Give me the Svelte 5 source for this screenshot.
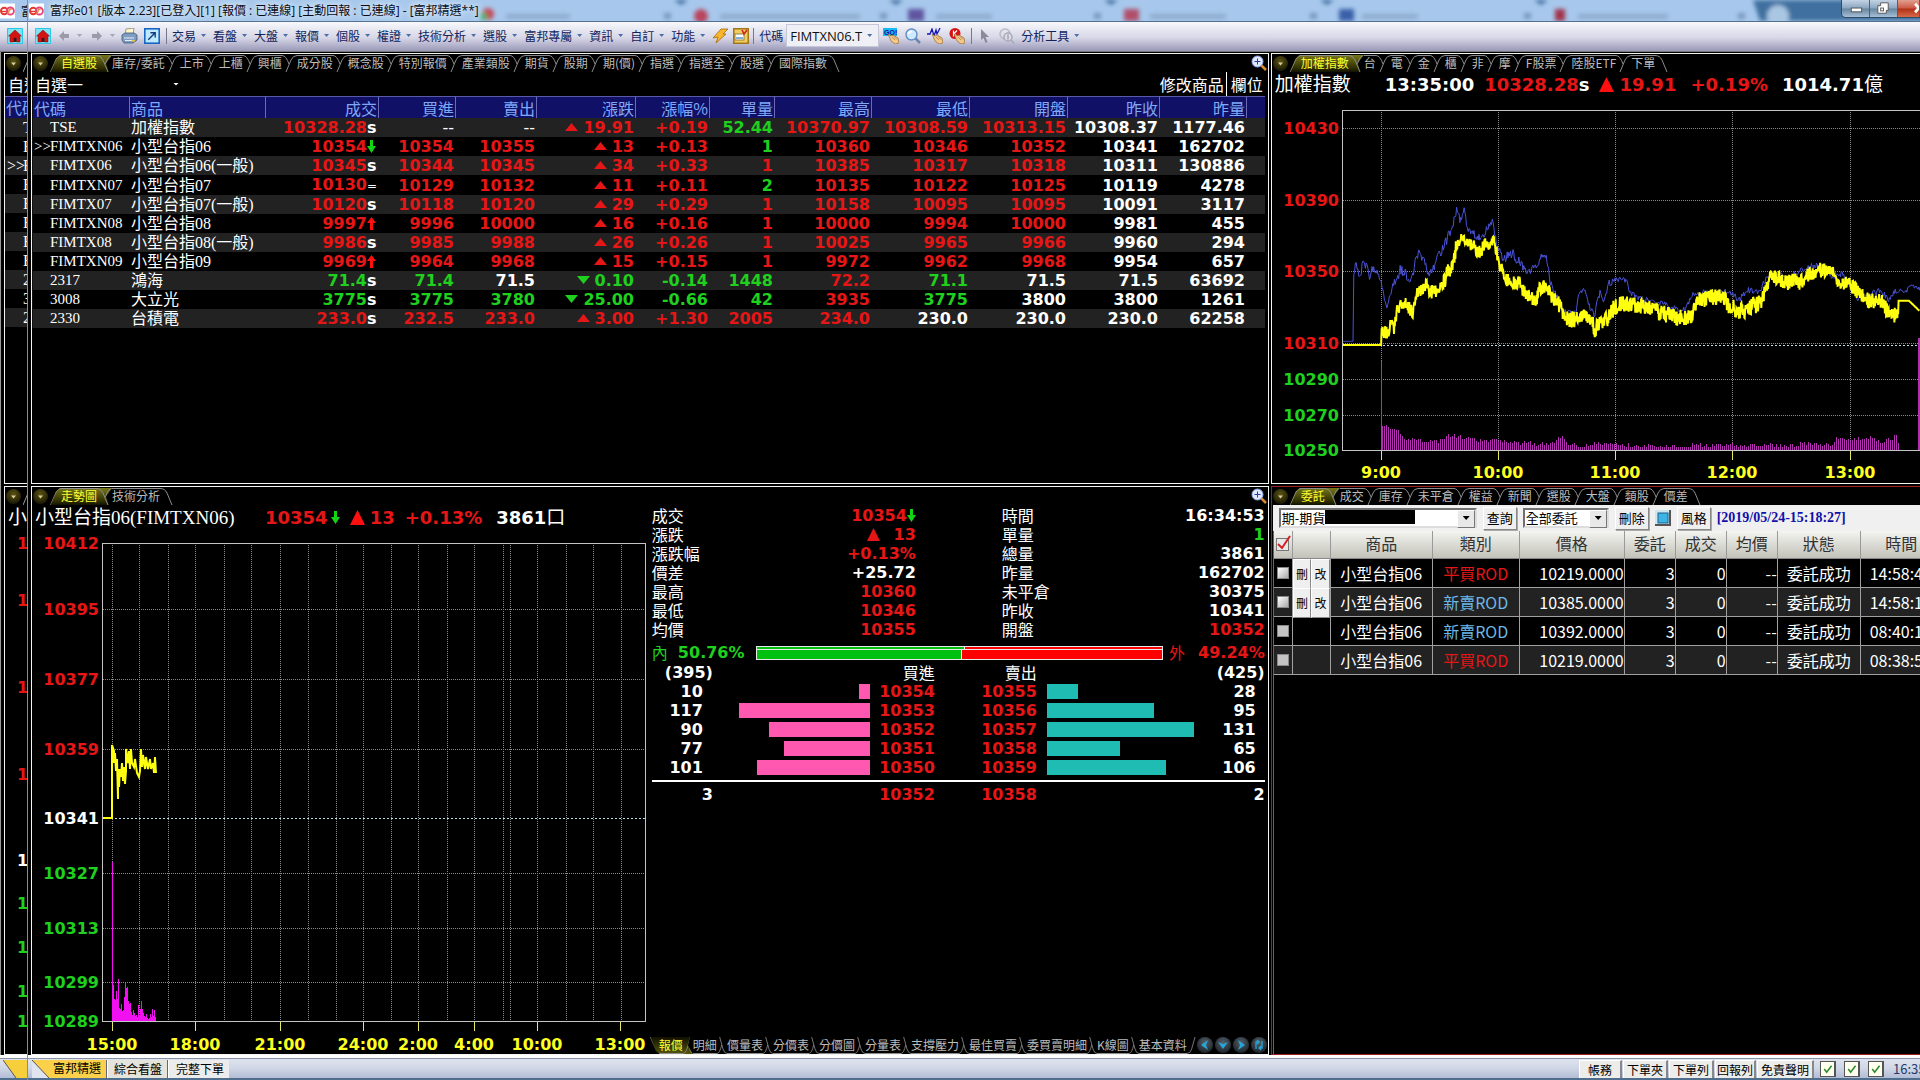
<script>
  const menus = ['交易', '看盤', '大盤', '報價', '個股', '權證', '技術分析', '選股', '富邦專屬', '資訊', '自訂', '功能'];
  const watchTabs = ['自選股', '庫存/委託', '上市', '上櫃', '興櫃', '成分股', '概念股', '特別報價', '產業類股', '期貨', '股期', '期(價)', '指選', '指選全', '股選', '國際指數'];
  const indexTabs = ['加權指數', '台', '電', '金', '櫃', '非', '摩', 'F股票', '陸股ETF', '下單'];
  const trendTabs = ['走勢圖', '技術分析'];
  const orderTabs = ['委託', '成交', '庫存', '未平倉', '權益', '新聞', '選股', '大盤', '類股', '價差'];
  const quoteTabs = ['報價', '明細', '價量表', '分價表', '分價圖', '分量表', '支撐壓力', '最佳買賣', '委買賣明細', 'K線圖', '基本資料'];

  const heads = ['代碼', '商品', '成交', '買進', '賣出', '漲跌', '漲幅%', '單量', '最高', '最低', '開盤', '昨收', '昨量'];
  const colWidths = [97, 136, 113, 77, 81, 99, 74, 65, 97, 98, 98, 92, 87];

  // Each quote: code, name, then "value|colour" cells; the last trade carries a suffix mark.
  const rows = [
    ['TSE', '加權指數', '10328.28|r', 's', '--|w', '--|w', '19.91|r', '+0.19|r', '52.44|g', '10370.97|r', '10308.59|r', '10313.15|r', '10308.37|w', '1177.46|w'],
    ['FIMTXN06', '小型台指06', '10354|r', 'down', '10354|r', '10355|r', '13|r', '+0.13|r', '1|g', '10360|r', '10346|r', '10352|r', '10341|w', '162702|w'],
    ['FIMTX06', '小型台指06(一般)', '10345|r', 's', '10344|r', '10345|r', '34|r', '+0.33|r', '1|r', '10385|r', '10317|r', '10318|r', '10311|w', '130886|w'],
    ['FIMTXN07', '小型台指07', '10130|r', '=', '10129|r', '10132|r', '11|r', '+0.11|r', '2|g', '10135|r', '10122|r', '10125|r', '10119|w', '4278|w'],
    ['FIMTX07', '小型台指07(一般)', '10120|r', 's', '10118|r', '10120|r', '29|r', '+0.29|r', '1|r', '10158|r', '10095|r', '10095|r', '10091|w', '3117|w'],
    ['FIMTXN08', '小型台指08', '9997|r', 'up', '9996|r', '10000|r', '16|r', '+0.16|r', '1|r', '10000|r', '9994|r', '10000|r', '9981|w', '455|w'],
    ['FIMTX08', '小型台指08(一般)', '9986|r', 's', '9985|r', '9988|r', '26|r', '+0.26|r', '1|r', '10025|r', '9965|r', '9966|r', '9960|w', '294|w'],
    ['FIMTXN09', '小型台指09', '9969|r', 'up', '9964|r', '9968|r', '15|r', '+0.15|r', '1|r', '9972|r', '9962|r', '9968|r', '9954|w', '657|w'],
    ['2317', '鴻海', '71.4|g', 's', '71.4|g', '71.5|w', '0.10|g', '-0.14|g', '1448|g', '72.2|r', '71.1|g', '71.5|w', '71.5|w', '63692|w'],
    ['3008', '大立光', '3775|g', 's', '3775|g', '3780|g', '25.00|g', '-0.66|g', '42|g', '3935|r', '3775|g', '3800|w', '3800|w', '1261|w'],
    ['2330', '台積電', '233.0|r', 's', '232.5|r', '233.0|r', '3.00|r', '+1.30|r', '2005|r', '234.0|r', '230.0|w', '230.0|w', '230.0|w', '62258|w']
  ].map(([code, name, last, mark, ...cells]) => ({
    code,
    name,
    last: last.split('|'),
    mark,
    cells: cells.map((c) => c.split('|'))
  }));

  const details = [
    ['成交', '10354', 'r', '時間', '16:34:53', 'w'],
    ['漲跌', '13', 'r', '單量', '1', 'g'],
    ['漲跌幅', '+0.13%', 'r', '總量', '3861', 'w'],
    ['價差', '+25.72', 'w', '昨量', '162702', 'w'],
    ['最高', '10360', 'r', '未平倉', '30375', 'w'],
    ['最低', '10346', 'r', '昨收', '10341', 'w'],
    ['均價', '10355', 'r', '開盤', '10352', 'r']
  ];
  const depth = [
    [10, 10354, 10355, 28],
    [117, 10353, 10356, 95],
    [90, 10352, 10357, 131],
    [77, 10351, 10358, 65],
    [101, 10350, 10359, 106]
  ];

  const orders = [
    ['平買ROD', 'r', '10219.0000', '14:58:4', true],
    ['新賣ROD', 'b', '10385.0000', '14:58:1', true],
    ['新賣ROD', 'b', '10392.0000', '08:40:1', false],
    ['平買ROD', 'r', '10219.0000', '08:38:5', false]
  ];

  const stripCodes = ['T', 'F', 'F', 'F', 'F', 'F', 'F', 'F', '2', '3', '2'];
  const stripLevels = [[12, 'r'], [69, 'r'], [156, 'r'], [243, 'r'], [329, 'w'], [372, 'g'], [416, 'g'], [460, 'g'], [490, 'g']];

  const indexLevels = [[30, 10430, 'r'], [102, 10390, 'r'], [173, 10350, 'r'], [245, 10310, 'r'], [281, 10290, 'g'], [317, 10270, 'g'], [352, 10250, 'g']];
  const indexHours = [[109, '9:00'], [226, '10:00'], [343, '11:00'], [460, '12:00'], [578, '13:00']];
  const trendLevels = [[12, 10412, 'r'], [78, 10395, 'r'], [148, 10377, 'r'], [218, 10359, 'r'], [287, 10341, 'w'], [342, 10327, 'g'], [397, 10313, 'g'], [451, 10299, 'g'], [490, 10289, 'g']];
  const trendVerticals = [80, 107, 136, 163, 192, 219, 248, 276, 304, 331, 359, 386, 415, 442, 471, 478, 505, 534, 561, 589];
  const trendHours = [[80, '15:00'], [163, '18:00'], [248, '21:00'], [331, '24:00'], [386, '2:00'], [442, '4:00'], [505, '10:00'], [588, '13:00']];

  // Small seeded generator, so that the tick noise is the same on every load.
  function noise(seed) {
    let s = seed;
    return () => ((s = (s * 16807) % 2147483647) / 2147483647) * 2 - 1;
  }

  const sx = (x) => 71 + (x - 175) / 2.412;

  function interpolate(points, x) {
    let i = 1;
    while (i < points.length - 1 && points[i][0] < x) i++;
    const a = points[i - 1];
    const b = points[i];
    const t = Math.min(1, Math.max(0, (x - a[0]) / (b[0] - a[0] || 1)));
    return [a[1] + (b[1] - a[1]) * t, (a[2] ?? 0) + ((b[2] ?? 0) - (a[2] ?? 0)) * t];
  }

  function trace(points, step, seed, gain) {
    const rnd = noise(seed);
    const out = [];
    for (let x = points[0][0]; x <= points[points.length - 1][0]; x += step) {
      const [y, spread] = interpolate(points, x);
      out.push(`${sx(x).toFixed(1)},${((y + rnd() * spread * gain) / 3 + 2).toFixed(1)}`);
    }
    return out.join(' ');
  }

  const cash = [
    [175, 735, 0], [267, 735, 0], [268, 690, 12], [285, 706, 20], [290, 665, 12], [298, 690, 12], [305, 630, 18], [320, 608, 16], [345, 635, 18], [355, 575, 15],
    [375, 558, 16], [390, 575, 20], [400, 575, 14], [410, 560, 14], [430, 520, 26], [440, 490, 20], [450, 430, 20], [460, 412, 10], [475, 425, 10],
    [490, 445, 20], [508, 455, 18], [520, 430, 20], [540, 422, 12], [550, 480, 20], [565, 540, 16], [600, 550, 18], [615, 580, 16], [640, 605, 16],
    [650, 562, 20], [665, 560, 16], [680, 590, 18], [695, 612, 18], [710, 655, 22], [735, 660, 20], [755, 642, 18], [775, 660, 16], [783, 690, 22],
    [795, 665, 18], [815, 655, 18], [830, 615, 26], [850, 610, 18], [900, 620, 18], [945, 640, 20], [990, 655, 22], [1018, 650, 16], [1022, 620, 12],
    [1035, 600, 20], [1090, 587, 20], [1100, 610, 20], [1130, 635, 22], [1180, 610, 20], [1193, 580, 16], [1205, 530, 14], [1215, 530, 16],
    [1240, 545, 20], [1280, 545, 20], [1300, 525, 20], [1318, 510, 20], [1358, 512, 12], [1365, 548, 12], [1400, 552, 20], [1415, 575, 16],
    [1440, 600, 20], [1475, 605, 18], [1490, 635, 20], [1514, 652, 18], [1515, 602, 0], [1540, 602, 0], [1565, 632, 0]
  ];
  const futures = [
    [175, 724, 0], [199, 724, 0], [201, 520, 10], [205, 485, 10], [215, 540, 14], [222, 495, 14], [230, 490, 14], [240, 530, 14], [250, 500, 14], [262, 520, 12],
    [270, 560, 14], [281, 630, 10], [292, 560, 14], [300, 550, 14], [313, 510, 12], [325, 520, 14], [335, 545, 12], [345, 515, 12], [352, 470, 14],
    [360, 462, 12], [370, 475, 12], [380, 530, 10], [395, 500, 10], [410, 455, 14], [425, 420, 14], [440, 375, 12], [450, 330, 12], [458, 360, 10],
    [467, 335, 10], [475, 380, 10], [490, 400, 10], [508, 420, 10], [520, 390, 10], [535, 362, 10], [545, 430, 10], [560, 470, 14], [585, 465, 14],
    [605, 495, 12], [620, 515, 12], [640, 500, 10], [658, 460, 8], [667, 480, 8], [675, 550, 10], [695, 600, 10], [710, 640, 10], [735, 640, 10],
    [745, 580, 10], [757, 570, 8], [770, 620, 8], [782, 650, 8], [792, 580, 12], [805, 600, 12], [815, 550, 10], [835, 535, 8], [857, 538, 8],
    [868, 580, 8], [900, 600, 8], [950, 610, 8], [970, 625, 8], [1000, 630, 8], [1020, 580, 6], [1050, 577, 8], [1090, 575, 8], [1115, 580, 8],
    [1130, 600, 8], [1150, 570, 8], [1180, 575, 8], [1193, 540, 8], [1210, 520, 8], [1250, 530, 8], [1300, 500, 8], [1335, 495, 8], [1350, 530, 8],
    [1378, 520, 8], [1400, 560, 8], [1415, 595, 8], [1440, 590, 8], [1470, 570, 10], [1490, 600, 8], [1505, 575, 6], [1535, 572, 6], [1545, 555, 4], [1568, 568, 6]
  ];
  const indexVolume = [
    [270, 78], [290, 58], [310, 54], [320, 35], [340, 33], [360, 30], [400, 25], [430, 44], [460, 38], [500, 28], [540, 28], [560, 30], [600, 20],
    [620, 25], [640, 18], [680, 20], [703, 42], [715, 20], [750, 12], [790, 20], [830, 18], [880, 12], [1000, 10], [1020, 18], [1050, 12],
    [1115, 14], [1190, 15], [1250, 12], [1290, 20], [1320, 15], [1350, 15], [1368, 38], [1400, 28], [1435, 40], [1470, 25], [1510, 40], [1514, 20]
  ];
  const cashLine = trace(cash, 1, 77, 1.25);
  const futuresLine = trace(futures, 2, 1234, 1.2);

  const volRnd = noise(41);
  const indexBars = [];
  for (let x = 110; x <= 626; x += 2) {
    const [h] = interpolate(indexVolume, 175 + (x - 71) * 2.412);
    indexBars.push([x, Math.max(3, Math.round(h / 3 + volRnd() * 2))]);
  }

  const trendLine = '70,287 80,287 80,214 82,220 82,232 83,222 84,240 85,228 86,268 86,238 87,256 88,238 89,246 90,232 91,250 92,236 93,253 94,240 94,218 96,232 97,220 98,238 99,218 100,232 102,236 103,228 105,242 107,246 108,240 109,218 110,236 111,224 113,238 114,226 116,238 118,228 119,238 121,232 122,242 123,226 124,242';
  const trendBars = [36, 22, 21, 30, 22, 42, 13, 12, 17, 10, 11, 24, 38, 33, 34, 20, 17, 18, 9, 6, 11, 8, 5, 6, 4, 16, 6, 12, 20, 12, 8, 5, 4, 7, 3, 2, 3, 7, 4, 12, 5, 11, 4];
</script>

{#snippet tabbar(items, flip)}
  <div class="tabs" class:flip>
    {#each items as item, i}
      <button class="tab" class:active={i === 0}>
        {#if i === 0}
          <svg class="lead" viewBox="0 0 11 17" preserveAspectRatio="none" aria-hidden="true"><path d="M0 17 L6 4 Q8 .5 11 .5" /></svg>
        {/if}
        <span>{item}</span>
        <svg class="sep" viewBox="0 0 15 17" preserveAspectRatio="none" aria-hidden="true">
          {#if i === items.length - 1}
            <path d="M0 .5 Q5 .5 7 5 L12 17" />
          {:else if i === 0}
            <path d="M0 .5 Q4 .5 6 5 L11 17 M15 .5 Q11 .5 8.500 9" />
          {:else}
            <path d="M0 .5 Q4 .5 7 9 M15 .5 Q11 .5 9 5 L4 17" />
          {/if}
        </svg>
      </button>
    {/each}
  </div>
{/snippet}

{#snippet orb()}
  <button class="orb" aria-label="選單"><svg viewBox="0 0 15 15"><path d="M5 6.500 H10 L7.500 9.500 Z" fill="#d9cf9a" /></svg></button>
{/snippet}

{#snippet zoomIcon()}
  <button class="zoom" aria-label="放大">
    <svg viewBox="0 0 16 16">
      <path d="M10.500 10.500 L15 15" stroke="#d98a2c" stroke-width="2.500" />
      <circle cx="6.500" cy="6.500" r="5.500" fill="#dfe8ff" stroke="#8fa6e6" />
      <path d="M6.500 3.500 V9.500 M3.500 6.500 H9.500" stroke="#2b3f9a" />
    </svg>
  </button>
{/snippet}

{#snippet down()}<svg class="arrow" viewBox="0 0 9 13" aria-label="跌"><path d="M3 0 H6 V6 H9 L4.500 13 L0 6 H3 Z" fill="#12d612" /></svg>{/snippet}
{#snippet up()}<svg class="arrow" viewBox="0 0 9 13" aria-label="漲"><path d="M3 13 H6 V6 H9 L4.500 0 L0 6 H3 Z" fill="#ff1010" /></svg>{/snippet}

{#snippet logo()}
  <svg class="logo" viewBox="0 0 16 16" aria-hidden="true">
    <rect width="16" height="16" fill="#fff" />
    <circle cx="4.500" cy="8" r="3.500" fill="none" stroke="#e0392b" stroke-width="2" />
    <path d="M2 8.500 H7.500" stroke="#e0392b" stroke-width="1.500" />
    <circle cx="11" cy="8" r="3.800" fill="none" stroke="#e8457a" stroke-width="2" />
    <path d="M8 11 Q10 9 10 7 Q11 5 12 7" fill="none" stroke="#f08a3a" stroke-width="1.500" />
  </svg>
{/snippet}

{#snippet home()}
  <svg class="ico" viewBox="0 0 16 16" aria-hidden="true">
    <rect width="16" height="16" rx="1" fill="#2cc6e8" /><rect x="1" y="1" width="14" height="14" fill="#7fe3f2" />
    <path d="M8 2 L14.500 8 H13 V14 H9.500 V10 H6.500 V14 H3 V8 H1.500 Z" fill="#d31414" stroke="#7c0808" stroke-width=".5" />
    <rect x="6.500" y="10" width="3" height="4" fill="#4a1010" />
  </svg>
{/snippet}

{#snippet hand()}
  <path d="M5 6 L8 8 L10 7 L15 10 L16 15 L12 16 L8 13 Z" fill="#f3c88c" stroke="#9a6a2c" stroke-width=".7" /><path d="M9 9 L12 12 M11 8.500 L14 11.500" stroke="#9a6a2c" stroke-width=".6" />
{/snippet}

<div class="desktop">
  <aside class="strip" aria-hidden="true">
    <div class="titlebar">{@render logo()}<span>富</span></div>
    <div class="toolbar">{@render home()}</div>
    <div class="slices">
      <div class="panel">
        <div class="tabrow">{@render orb()}<svg class="slant" viewBox="0 0 6 17"><path d="M0 17 L6 3" stroke="#999" fill="none" /></svg></div>
        <div class="subrow">自選</div>
        <div class="striphead">代碼</div>
        {#each stripCodes as c, i}
          <div class="stripline" class:odd={i % 2 === 0}><i>{i === 2 ? '>>' : ''}</i>{c}</div>
        {/each}
      </div>
      <div class="panel">
        <div class="tabrow">{@render orb()}<svg class="slant" viewBox="0 0 6 17"><path d="M0 17 L6 3" stroke="#999" fill="none" /></svg></div>
        <div class="heading"><span class="zh">小型</span></div>
        <svg class="chart">
          {#each stripLevels as [y, c]}
            <text x="12" y={y + 6} class={c}>1</text>
          {/each}
        </svg>
      </div>
    </div>
    <div class="status"><svg class="stab" viewBox="0 0 24 18"><path d="M0 0 H24 V18 H13 Z" fill="#f7cf3c" /><path d="M0 0 L13 18" stroke="#555" /></svg></div>
  </aside>

  <div class="window">
    <header class="titlebar">
      <svg class="glass" aria-hidden="true">
        <defs><filter id="soft" x="-20%" y="-50%" width="140%" height="200%"><feGaussianBlur stdDeviation="2" /></filter></defs>
        <g filter="url(#soft)">
          <path d="M1725 0 H1900 V21 H1732 Z" fill="#3f6f9f" />
          <circle cx="1750" cy="16" r="11" fill="#a9c6e2" />
          {#each [646, 861, 1076, 1292, 1506] as x}<path d={`M${x} 0 H${x + 14} L${x + 7} 5 Z`} fill="#3c6b9c" />{/each}
          <circle cx="460" cy="14" r="6" fill="#c4475a" /><rect x="453" y="13" width="6" height="7" fill="#3fae6a" />
          <circle cx="673" cy="16" r="7" fill="#b8455c" />
          <rect x="880" y="9" width="16" height="12" fill="#5f55a0" />
          <rect x="1096" y="9" width="15" height="12" fill="#b0506a" />
          <rect x="1311" y="9" width="15" height="12" fill="#3b5fa8" />
          <rect x="1527" y="9" width="10" height="12" fill="#a0304c" />
          {#each [[478, 64], [692, 140], [908, 56], [1122, 76], [1334, 56], [1550, 90]] as [x, w]}<rect {x} y="14" width={w} height="5" fill="#8caacd" />{/each}
          {#each [636, 852, 1066, 1282, 1496, 1710] as x}<rect {x} y="13" width="7" height="6" fill="#7797bd" />{/each}
        </g>
      </svg>
      {@render logo()}
      <h1>富邦e01 [版本 2.23][已登入][1] [報價 : 已連線] [主動回報 : 已連線] - [富邦精選**]</h1>
      <div class="winbtns">
        <button aria-label="最小化"><svg viewBox="0 0 28 18"><rect x="9.500" y="8.500" width="11" height="4" fill="#fff" stroke="#555" /></svg></button>
        <button aria-label="還原"><svg viewBox="0 0 28 18"><path d="M11 3 H19 V11 H17 V14 H8 V6 H11 Z" fill="#fff" stroke="#555" /><rect x="11" y="8.500" width="3" height="3" fill="none" stroke="#555" /></svg></button>
        <button class="close" aria-label="關閉"><svg viewBox="0 0 22 18"><path d="M18 4 L26 13 M26 4 L18 13" stroke="#fff" stroke-width="3" /></svg></button>
      </div>
    </header>

    <nav class="toolbar">
      <button class="t home" aria-label="首頁">{@render home()}</button>
      <button class="t" aria-label="上一頁"><svg class="nav" viewBox="0 0 11 12"><path d="M0 6 L5 1 V4 H10 V8 H5 V11 Z" fill="#9a9aa8" /></svg><i class="caret pale"></i></button>
      <button class="t" aria-label="下一頁"><svg class="nav" viewBox="0 0 11 12"><path d="M10 6 L5 1 V4 H0 V8 H5 V11 Z" fill="#9a9aa8" /></svg><i class="caret pale"></i></button>
      <button class="t print" aria-label="列印">
        <svg class="ico wide" viewBox="0 0 17 16"><path d="M5 1 L13 0 L12 7 H4 Z" fill="#fff7c9" stroke="#777" stroke-width=".7" /><path d="M1 7 L4 5 H13 L16 7 V12 L12 15 H3 L1 12 Z" fill="#7f9dc2" stroke="#3b5575" stroke-width=".8" /><path d="M3 10 H13 M4 12.500 H12" stroke="#e8eef7" /><rect x="11" y="12" width="3" height="1.500" fill="#e8c43a" /></svg>
      </button>
      <button class="t" aria-label="開新視窗"><svg class="ico" viewBox="0 0 15 15"><rect x=".75" y=".75" width="13.500" height="13.500" fill="#bfe9ff" stroke="#1766c2" stroke-width="1.500" /><path d="M4 11 L10 5 M6 4.500 H10.500 V9" fill="none" stroke="#123a80" stroke-width="1.300" /></svg></button>
      <i class="bar"></i>
      {#each menus as m}
        <button class="menu">{m}<i class="caret"></i></button>
      {/each}
      <button class="t tight" aria-label="閃電下單"><svg class="ico wide" viewBox="0 0 17 16"><path d="M9 1 L16 1 L11 6 L14 6 L4 15 L6 9 L1 10 Z" fill="#f8b62a" stroke="#a86a08" stroke-width=".8" /></svg></button>
      <button class="t tight" aria-label="下單匣"><svg class="ico" viewBox="0 0 16 16"><rect x=".75" y=".75" width="14.500" height="14.500" fill="#f2cd62" stroke="#a27518" stroke-width="1.500" /><rect x="2" y="6" width="9" height="6" fill="#fff" stroke="#7d6a2c" stroke-width=".8" /><rect x="3" y="9" width="7" height="2" fill="#86add2" /><path d="M9 2 L11 6 L14 2" fill="none" stroke="#d02020" stroke-width="1.600" /></svg></button>
      <i class="bar"></i>
      <label class="lab" for="code">代碼</label>
      <span class="combo"><input id="code" value="FIMTXN06.T" /><i class="caret"></i></span>
      <button class="t" aria-label="GO"><svg class="ico" viewBox="0 0 16 16"><rect width="14" height="8" fill="#18b8f0" /><text x="1" y="7" class="mini">GO!</text>{@render hand()}</svg></button>
      <button class="t" aria-label="查詢"><svg class="ico" viewBox="0 0 16 16"><path d="M10 10 L15 15" stroke="#6f86a8" stroke-width="2.500" /><circle cx="6.500" cy="6.500" r="5.500" fill="#cfeaff" stroke="#5f8dc4" stroke-width="1.400" /><path d="M3.500 6 Q4 3.500 7 3.500" stroke="#fff" stroke-width="1.500" fill="none" /></svg></button>
      <button class="t" aria-label="走勢"><svg class="ico" viewBox="0 0 16 16"><path d="M0 6 H3 L5 1 L7 8 L9 2 L10 6 L13 0" fill="none" stroke="#1616b8" stroke-width="1.300" />{@render hand()}</svg></button>
      <button class="t" aria-label="K線"><svg class="ico" viewBox="0 0 16 16"><circle cx="6" cy="5.500" r="5.500" fill="#d81212" /><path d="M4.500 2.500 V8.500 M8 2.500 L5 5.500 L8 8.500" fill="none" stroke="#fff" stroke-width="1.200" />{@render hand()}</svg></button>
      <i class="bar"></i>
      <button class="t" aria-label="游標"><svg class="ico" viewBox="0 0 16 16"><path d="M4 1 L12 9 H8.500 L10.500 14 L8.500 15 L6.500 10 L4 12 Z" fill="#8a8a98" /></svg></button>
      <button class="t" aria-label="資金"><svg class="ico" viewBox="0 0 16 16"><circle cx="6" cy="6" r="5" fill="none" stroke="#b9b9c6" stroke-width="1.500" /><circle cx="9" cy="9" r="4" fill="#dcdce6" stroke="#a9a9b8" stroke-width="1.500" /><path d="M12 12 L15 15.500 M9 6.500 V11.500" stroke="#a9a9b8" stroke-width="1.600" /></svg></button>
      <button class="menu">分析工具<i class="caret"></i></button>
    </nav>

    <main>
      <section class="panel watch">
        <div class="tabrow">{@render orb()}{@render tabbar(watchTabs, false)}{@render zoomIcon()}</div>
        <div class="subrow">
          <button class="pick">自選一<i></i></button>
          <span class="links"><button>修改商品</button><button>欄位</button></span>
        </div>
        <table class="quotes">
          <colgroup>
            {#each colWidths as w}<col style:width="{w}px" />{/each}
            <col />
          </colgroup>
          <thead><tr>{#each heads as h, i}<th scope="col" class:word={i < 2}>{h}</th>{/each}<th class="fill"></th></tr></thead>
          <tbody>
            {#each rows as row}
              <tr>
                <td class="code"><i>{row.code === 'FIMTXN06' ? '>>' : ''}</i>{row.code}</td>
                <td class="name">{row.name}</td>
                <td class="last {row.last[1]}">{row.last[0]}<span class="mark">{#if row.mark === 'down'}{@render down()}{:else if row.mark === 'up'}{@render up()}{:else if row.mark === '='}<small>=</small>{:else}s{/if}</span></td>
                {#each row.cells as [v, c], i}
                  <td class={c} class:thin={v === '--'}>{#if i === 2}<svg class="tri" viewBox="0 0 13 8" aria-hidden="true"><path d={c === 'r' ? 'M0 8 L6.500 0 L13 8 Z' : 'M0 0 H13 L6.500 8 Z'} /></svg>{/if}{v}</td>
                {/each}
                <td></td>
              </tr>
            {/each}
          </tbody>
        </table>
      </section>

      <section class="panel index">
        <div class="tabrow">{@render orb()}{@render tabbar(indexTabs, false)}</div>
        <div class="heading">
          <span class="zh namebox">加權指數</span><b class="w">13:35:00</b><b class="r">10328.28<em>s</em></b>
          <b class="r"><svg class="bigtri" viewBox="0 0 15 15" aria-hidden="true"><path d="M0 15 L7.500 0 L15 15 Z" /></svg>19.91</b><b class="r apart">+0.19%</b><b class="w apart">1014.71<span class="zh">億</span></b>
        </div>
        <svg class="chart" role="img" aria-label="加權指數走勢">
          <g class="grid">
            {#each indexLevels.slice(0, 6) as [y]}<line x1="71" x2="100%" y1={y + 0.5} y2={y + 0.5} />{/each}
            {#each indexHours as [x]}<line x1={x + 0.5} x2={x + 0.5} y1="12" y2="352" />{/each}
          </g>
          <line class="ref" x1="71" x2="100%" y1="247.500" y2="247.500" />
          {#each indexBars as [x, h]}<rect class="vol" {x} y={352 - h} width="1" height={h} />{/each}
          <rect class="vol" x="109" y="263" width="1" height="89" /><rect class="vol" x="646" y="240" width="2" height="112" />
          <polyline class="fut" points={futuresLine} />
          <polyline class="cash" points={cashLine} />
          <path class="frame" d="M2000 12.500 H70.500 V352.500 H2000" />
          {#each indexHours as [x, t]}<line class="tick" x1={x + 0.5} x2={x + 0.5} y1="353" y2="362" /><text x={x} y="380" class="hour">{t}</text>{/each}
          {#each indexLevels as [y, v, c]}<text x="67" y={y + 6} class="level {c}">{v}</text>{/each}
        </svg>
      </section>

      <section class="panel trend">
        <div class="tabrow">{@render orb()}{@render tabbar(trendTabs, false)}{@render zoomIcon()}</div>
        <div class="split">
          <div class="left">
            <div class="heading">
              <span class="zh namebox">小型台指06(FIMTXN06)</span><b class="r">10354{@render down()}</b>
              <b class="r"><svg class="bigtri" viewBox="0 0 15 15" aria-hidden="true"><path d="M0 15 L7.500 0 L15 15 Z" /></svg>13</b><b class="r">+0.13%</b><b class="w apart">3861<span class="zh">口</span></b>
            </div>
            <svg class="chart" role="img" aria-label="小型台指06走勢">
              <g class="grid">
                {#each trendLevels.slice(1, 8) as [y]}{#if y !== 287}<line x1="71" x2="613" y1={y + 0.5} y2={y + 0.5} />{/if}{/each}
                {#each trendVerticals as x}<line x1={x + 0.5} x2={x + 0.5} y1="12" y2="490" />{/each}
              </g>
              <line class="ref" x1="71" x2="613" y1="287.500" y2="287.500" />
              <rect class="vol hot" x="80" y="331" width="1" height="159" />
              {#each trendBars as h, i}<rect class="vol hot" x={81 + i} y={490 - h} width="1" height={h} />{/each}
              <polyline class="cash" points={trendLine} />
              <rect class="frame" x="70.500" y="12.500" width="543" height="478" />
              {#each trendHours as [x, t]}<line class="tick" x1={x + 0.5} x2={x + 0.5} y1="491" y2="500" /><text x={x} y="519" class="hour">{t}</text>{/each}
              {#each trendLevels as [y, v, c]}<text x="67" y={y + 6} class="level {c}">{v}</text>{/each}
            </svg>
          </div>
          <div class="right">
            <dl class="details">
              {#each details as [a, b, c, d, e, f], i}
                <dt>{a}</dt>
                <dd class={c}>{#if i === 1}<svg class="tri tall" viewBox="0 0 13 13" aria-hidden="true"><path d="M0 13 L6.500 0 L13 13 Z" /></svg>{/if}{b}{#if i === 0}{@render down()}{/if}</dd>
                <dt class="second">{d}</dt>
                <dd class={f}>{e}</dd>
              {/each}
            </dl>
            <div class="ratio">
              <span class="zh g">內</span><b class="g">50.76%</b>
              <div class="gauge"><div class="thin"><i></i></div><div class="thick"><i></i></div></div>
              <span class="zh r">外</span><b class="r out">49.24%</b>
            </div>
            <div class="depth">
              <div class="drow"><b class="total">(395)</b><span></span><span class="zh">買進</span><span class="zh">賣出</span><span></span><b class="total">(425)</b></div>
              {#each depth as [bv, bid, ask, av]}
                <div class="drow">
                  <b>{bv}</b><span class="bid"><i style:width="{Math.round(bv * 1.117)}px"></i></span><b class="r">{bid}</b>
                  <b class="r">{ask}</b><span class="ask"><i style:width="{Math.round(av * 1.122)}px"></i></span><b>{av}</b>
                </div>
              {/each}
              <div class="drow sum"><b class="total">3</b><span></span><b class="r">10352</b><b class="r">10358</b><span></span><b class="total">2</b></div>
            </div>
            <div class="foot">
              {@render tabbar(quoteTabs, true)}
              <div class="dots">
                <button aria-label="左"><svg viewBox="0 0 16 16"><path d="M11 3 L4 8 L11 13 L9 8 Z" /></svg></button>
                <button aria-label="下"><svg viewBox="0 0 16 16"><path d="M3 5 L8 12 L13 5 L8 7 Z" /></svg></button>
                <button aria-label="右"><svg viewBox="0 0 16 16"><path d="M5 3 L12 8 L5 13 L7 8 Z" /></svg></button>
                <button aria-label="重新整理"><svg viewBox="0 0 16 16"><path d="M5 12 V5 H8 M6 3 L8 5 L6 7 M11 4 V11 H8 M10 9 L8 11 L10 13" fill="none" stroke="#25a5d8" stroke-width="1.300" /></svg></button>
              </div>
            </div>
          </div>
        </div>
      </section>

      <section class="panel orders">
        <div class="tabrow">{@render orb()}{@render tabbar(orderTabs, false)}</div>
        <div class="filter">
          <span class="sel account"><select aria-label="帳號"><option>期-期貨</option></select><i class="mask"></i></span>
          <button>查詢</button>
          <span class="sel"><select aria-label="委託類別"><option>全部委託</option></select></span>
          <button>刪除</button>
          <svg class="swatch" viewBox="0 0 16 16" aria-hidden="true"><rect width="16" height="16" fill="#555" /><rect width="14" height="14" fill="#cfe6ee" /><rect x="3" y="3" width="10" height="10" fill="#3cb4e6" stroke="#1d5f8a" /></svg>
          <button>風格</button>
          <time>[2019/05/24-15:18:27]</time>
        </div>
        <div class="clip">
          <table class="book">
            <colgroup><col class="c1" /><col class="c2" /><col class="c3" /><col class="c4" /><col class="c5" /><col class="c6" /><col class="c6" /><col class="c6" /><col class="c7" /><col class="c8" /></colgroup>
            <thead>
              <tr>
                <th class="tickhead"><svg viewBox="0 0 15 17" aria-label="全選"><rect x=".5" y="3.500" width="12" height="12" fill="#e8e8e8" stroke="#777" /><path d="M2 9 L6 13 L14 1" fill="none" stroke="#d42020" stroke-width="2" /></svg></th>
                <th></th>
                {#each ['商品', '類別', '價格', '委託', '成交', '均價', '狀態', '時間'] as h}<th scope="col">{h}</th>{/each}
              </tr>
            </thead>
            <tbody>
              {#each orders as [kind, c, price, time, live]}
                <tr>
                  <td class="ck"><input type="checkbox" aria-label="選取" class:live /></td>
                  <td class="ops">{#if live}<div><button>刪</button><button>改</button></div>{/if}</td>
                  <td class="mid">小型台指06</td>
                  <td class="mid {c}">{kind}</td>
                  <td>{price}</td><td>3</td><td>0</td><td>--</td>
                  <td class="mid">委託成功</td>
                  <td class="time">{time}</td>
                </tr>
              {/each}
            </tbody>
          </table>
        </div>
      </section>
    </main>

    <footer class="status">
      <button class="page on"><svg class="stab" viewBox="0 0 17 18" preserveAspectRatio="none" aria-hidden="true"><path d="M0 0 L17 18 H0 Z" fill="#dfe4ee" /><path d="M0 0 L17 18" stroke="#555" /></svg>富邦精選</button>
      <button class="page">綜合看盤</button>
      <button class="page wide">完整下單</button>
      <span class="push"></span>
      <button class="act roomy">帳務</button><button class="act">下單夾</button><button class="act">下單列</button><button class="act snug">回報列</button><button class="act">免責聲明</button>
      {#each [1, 2, 3] as n}
        <span class="ok" class:first={n === 1}><svg viewBox="0 0 16 16" role="img" aria-label="連線正常 {n}"><path d="M4 8 L7 12 L13 4" fill="none" stroke="#2f8a2f" stroke-width="2" /></svg></span>
      {/each}
      <span class="clock">16:35</span>
    </footer>
  </div>
</div>

<style>
  :global(body) { margin: 0; background: #000; overflow: hidden; }
  :global(*) { box-sizing: border-box; }
  button, input, select { font: inherit; color: inherit; margin: 0; padding: 0; border: 0; background: none; border-radius: 0; }
  i, em { font-style: normal; }
  .desktop {
    display: grid; grid-template-columns: 28px minmax(0, 1fr); height: 100vh;
    font-family: "Noto Sans CJK TC", sans-serif; font-size: 12px; line-height: 16px; color: #fff;
  }
  .strip, .window { display: grid; grid-template-rows: 21px 31px minmax(0, 1fr) 25px; min-width: 0; }
  .strip { overflow: hidden; white-space: nowrap; border-right: 1px solid #8c8c8c; }
  .strip .titlebar, .strip .toolbar { padding-left: 0; gap: 6px; overflow: hidden; }
  .strip .titlebar { font-size: 12px; }
  .strip .toolbar { padding-left: 7px; }
  .slices { display: grid; grid-template-rows: 431fr 569fr; gap: 2px; padding: 1px 0 0 3px; border-left: 1px solid #999; background: #000; min-height: 0; }
  .slices .panel { border-right: 0; overflow: hidden; }
  .slant { width: 6px; height: 17px; flex: none; }
  .striphead { height: 22px; background: #101066; color: #7fa8f8; font-size: 16px; line-height: 20px; padding-left: 1px; border-top: 1px solid #5a5aa8; }
  .stripline { height: 19px; line-height: 19px; font: 16px/19px "Liberation Serif", serif; display: flex; }
  .stripline.odd { background: #222; }
  .stripline i { width: 18px; padding-left: 2px; flex: none; }

  .titlebar { position: relative; display: flex; align-items: center; background: #a7c8ec; color: #0a0a14; line-height: 20px; min-width: 0; }
  .window > .titlebar { gap: 6px; padding-left: 1px; }
  .glass { position: absolute; inset: 0; width: 100%; height: 100%; }
  .logo { width: 15px; height: 16px; flex: none; position: relative; }
  h1 { position: relative; margin: 0; font: 400 12px/20px "Open Sans", "Noto Sans CJK TC", sans-serif; white-space: nowrap; text-shadow: 0 0 5px #e6f1fc, 0 0 8px #e6f1fc; }
  .winbtns { position: relative; margin-left: auto; align-self: flex-start; display: flex; border: 1px solid #304a66; border-top: 0; border-right: 0; border-radius: 0 0 0 5px; overflow: hidden; }
  .winbtns button { width: 28px; height: 17px; border-right: 1px solid #47627e; background: linear-gradient(#c2d3e4, #8ba6c0 48%, #68869f 52%, #a5bfd6); }
  .winbtns .close { width: 22px; background: linear-gradient(#e0a090, #cc5a44 48%, #b03018 52%, #d86a48); }
  .winbtns svg { display: block; width: 100%; height: 17px; }

  .toolbar { display: flex; align-items: center; background: linear-gradient(#f8f8fd, #d6d6e6 55%, #9a98b8); border-top: 1px solid #54708e; border-bottom: 1px solid #777; color: #10245c; padding-left: 7px; padding-bottom: 2px; white-space: nowrap; min-width: 0; }
  .toolbar .t { display: flex; align-items: center; margin-right: 6px; }
  .toolbar .tight { margin-right: 4px; }
  .toolbar .home { margin-right: 8px; }
  .toolbar .t .caret { margin-left: 7px; margin-right: 4px; }
  .toolbar .print { margin-left: -4px; }
  .ico { width: 16px; height: 16px; display: block; flex: none; }
  .ico.wide { width: 17px; }
  .nav { width: 11px; height: 12px; }
  .caret { display: inline-block; width: 5px; height: 3px; background: #4d6ea8; clip-path: polygon(0 0, 100% 0, 50% 100%); }
  .caret.pale { background: #a4a4b4; }
  .bar { width: 1px; height: 16px; background: #77778c; margin: 0 5px 0 0; }
  .menu { display: flex; align-items: center; gap: 5px; margin-right: 7px; }
  .lab { margin-right: 3px; }
  .combo { display: flex; align-items: center; width: 93px; height: 23px; background: #eef0f6; border: 1px solid #c4c8d8; padding: 0 5px 0 3px; margin-right: 4px; color: #111; }
  .combo input { width: 77px; font: 13px/20px "Open Sans", sans-serif; outline: 0; }
  .mini { font: bold 7px "Liberation Sans", sans-serif; fill: #1010a0; }

  main { display: grid; grid-template-columns: minmax(0, 1239fr) minmax(0, 650fr); grid-template-rows: minmax(0, 431fr) minmax(0, 569fr); gap: 2px; padding: 1px 0 0 3px; background: #000; min-height: 0; }
  .panel { border: 1px solid #f4f4f4; background: #000; display: flex; flex-direction: column; min-width: 0; min-height: 0; overflow: hidden; }
  .index, .orders { border-right: 0; }
  .orders { border-color: #a02020; }
  .tabrow { display: flex; align-items: center; height: 18px; padding-left: 1px; flex: none; gap: 2px; }
  .orb { width: 15px; height: 15px; border-radius: 50%; background: radial-gradient(circle at 50% 35%, #5c5414, #1c1a04 75%); flex: none; }
  .orb svg { display: block; width: 15px; height: 15px; }
  .tabs { display: flex; height: 17px; align-self: flex-end; }
  .tab { display: flex; color: #bdbdbd; line-height: 17px; white-space: nowrap; height: 17px; }
  .tab span { border-top: 1px solid #8c8c8c; line-height: 13px; height: 17px; }
  .tab svg { height: 17px; fill: none; stroke: #8c8c8c; stroke-width: 1; flex: none; }
  .lead { width: 11px; }
  .sep { width: 15px; }
  .tab.active { color: #ffff30; background: linear-gradient(#77771a, #2b2b00 80%, #111100); clip-path: polygon(0 100%, 6px 20%, 10px 0, 100% 0, calc(100% - 6px) 50%, calc(100% - 3px) 100%); }
  .flip .tab.active { clip-path: polygon(0 0, 6px 80%, 10px 100%, 100% 100%, calc(100% - 5px) 50%, calc(100% - 3px) 0); background: linear-gradient(#111100, #55550c); }
  .flip .tab span { border-top: 0; border-bottom: 1px solid #8c8c8c; line-height: 16px; }
  .flip .tab svg { transform: scaleY(-1); }
  .flip .sep { width: 10px; }
  .flip .lead { width: 9px; }
  .zoom { width: 16px; height: 16px; margin-left: auto; margin-right: 1px; }
  .zoom svg { display: block; width: 16px; height: 16px; }

  .subrow { height: 24px; display: flex; align-items: center; justify-content: space-between; font-size: 16px; line-height: 24px; padding: 0 5px 0 3px; flex: none; }
  .pick { display: flex; align-items: center; gap: 90px; }
  .pick i { width: 6px; height: 3px; background: #fff; clip-path: polygon(0 0, 100% 0, 50% 100%); }
  .links button + button { border-left: 1px solid #fff; padding-left: 4px; margin-left: 2px; }

  table { border-collapse: separate; border-spacing: 0; table-layout: fixed; }
  .quotes { width: 100%; border-left: 1px solid #111; border-right: 3px solid #000; flex: none; }
  .quotes th { height: 22px; padding: 0 1px; background: #101066; color: #7fa8f8; font-weight: 400; font-size: 16px; line-height: 20px; text-align: right; border-top: 1px solid #5a5aa8; border-right: 1px solid #6a6ab8; white-space: nowrap; }
  .quotes th.word { text-align: left; }
  .quotes th.fill { border-right: 0; }
  .quotes td { height: 19px; padding: 0 2px 0 0; font: bold 16px/19px "DejaVu Sans", sans-serif; text-align: right; white-space: nowrap; color: #fff; }
  .quotes td.last { padding-right: 3px; }
  .quotes tr:nth-child(odd) td { background: #222; }
  .quotes td.code { text-align: left; font: 15px/19px "Liberation Serif", serif; padding-left: 1px; }
  .quotes td.code i { display: inline-block; width: 16px; }
  .quotes td.name { text-align: left; font: 16px/19px "Liberation Serif", "Noto Sans CJK TC", sans-serif; padding-left: 1px; }
  .quotes td.thin { font-weight: 400; }
  .quotes .mark { display: inline-block; width: 9px; color: #fff; text-align: center; line-height: 18px; }
  .mark small { font: 12px/18px "DejaVu Sans", sans-serif; }
  .arrow { width: 9px; height: 13px; vertical-align: -1px; }
  .tri { width: 13px; height: 8px; margin-right: 5px; vertical-align: 2px; fill: currentColor; }
  .tri.tall { height: 13px; margin-right: 14px; vertical-align: -1px; }
  .r, .quotes td.r { color: #e61616; fill: #e61616; }
  .g, .quotes td.g { color: #1fd01f; fill: #1fd01f; }
  .w { color: #fff; fill: #fff; }
  .b { color: #6cb8e6; }

  .heading { display: flex; align-items: center; gap: 10px; height: 26px; padding-left: 3px; font: bold 18px/26px "DejaVu Sans", sans-serif; white-space: nowrap; flex: none; }
  .heading .zh { font: 19px/26px "Liberation Serif", "Noto Sans CJK TC", sans-serif; }
  .heading .apart { margin-left: 4px; }
  .index .namebox { width: 100px; }
  .trend .namebox { width: 220px; }
  .heading em { color: #fff; }
  .heading .arrow { margin-left: 3px; height: 15px; }
  .bigtri { width: 15px; height: 15px; margin-right: 5px; vertical-align: -1px; fill: #ff1010; }
  .chart { display: block; width: 100%; flex: 1; min-height: 0; font: bold 16px "DejaVu Sans", sans-serif; }
  .grid line { stroke: #8a8a8a; stroke-dasharray: 1 1; shape-rendering: crispEdges; }
  .ref { stroke: #b8dce8; stroke-dasharray: 2 2; shape-rendering: crispEdges; }
  .frame { fill: none; stroke: #c4c4c4; shape-rendering: crispEdges; }
  .tick { stroke: #e8e860; }
  .vol { fill: #b030b0; }
  .hot { fill: #f010f0; }
  .fut { fill: none; stroke: #4a54d8; }
  .cash { fill: none; stroke: #ffff10; stroke-width: 2; }
  .hour { fill: #ffff20; text-anchor: middle; }
  .level { text-anchor: end; }

  .split { display: grid; grid-template-columns: minmax(0, 618fr) minmax(0, 618fr); flex: 1; min-height: 0; }
  .left, .right { display: flex; flex-direction: column; min-width: 0; min-height: 0; }
  .right { font: bold 16px/19px "DejaVu Sans", sans-serif; padding-top: 1px; }
  .details { display: grid; grid-template-columns: 80px 184px 170px 1fr; margin: 0; padding: 0 3px 0 2px; }
  .details dt, .right .zh { font: 16px/19px "Noto Sans CJK TC", sans-serif; }
  .details dt.second { padding-left: 86px; white-space: nowrap; }
  .details dd { margin: 0; text-align: right; height: 19px; }
  .ratio { display: flex; align-items: center; height: 24px; padding: 3px 3px 0 2px; }
  .ratio b { margin-left: 10px; }
  .ratio b.out { margin-left: 13px; }
  .gauge { flex: 1; height: 14px; border: 1px solid #e8e8e8; margin: 0 6px 0 11px; display: flex; flex-direction: column; }
  .gauge div { background: #ff0000; display: flex; }
  .gauge .thin { height: 3px; border-bottom: 1px solid #e8e8e8; }
  .gauge .thick { flex: 1; }
  .gauge i { background: #00c010; border-right: 1px solid #fff; }
  .gauge .thin i { width: 51.5%; }
  .gauge .thick i { width: 50.76%; }
  .drow { display: grid; grid-template-columns: 63px 157px 65px 102px 157px 1fr; height: 19px; text-align: right; padding: 0 3px 0 0; }
  .drow > b:first-child { padding-right: 10px; }
  .drow > b:last-child { padding-right: 9px; }
  .drow > b.total { padding-right: 0; }
  .bid, .ask { display: flex; align-items: center; }
  .bid { justify-content: flex-end; }
  .ask { padding-left: 10px; }
  .bid i, .ask i { height: 15px; }
  .bid i { background: #ff58b0; }
  .ask i { background: #1fbcb4; }
  .sum { margin: 3px 3px 0 2px; padding: 3px 0 0; height: 24px; border-top: 2px solid #fff; grid-template-columns: 61px 157px 65px 102px 157px 1fr; }
  .foot { margin-top: auto; display: flex; align-items: center; height: 18px; font: 12px/16px "Noto Sans CJK TC", sans-serif; }
  .dots { display: flex; gap: 2px; }
  .dots button { width: 16px; height: 16px; border-radius: 50%; background: radial-gradient(circle at 50% 35%, #55606a, #20262c 75%); }
  .dots svg { display: block; width: 16px; height: 16px; fill: #25a5d8; }

  .filter { display: flex; align-items: center; height: 26px; background: #f0f0f0; color: #000; padding-left: 6px; gap: 6px; white-space: nowrap; flex: none; margin-left: 1px; }
  .filter button { width: 34px; height: 23px; border: 1px solid #fff; border-right-color: #888; border-bottom-color: #888; background: #efefef; box-shadow: 1px 1px 0 #aaa; font-size: 13px; line-height: 20px; }
  .sel { position: relative; width: 86px; height: 20px; border: 2px solid #707070; border-right-color: #ddd; border-bottom-color: #ddd; background: #fff; display: flex; }
  .sel::after { content: ""; position: absolute; right: 0; top: 0; width: 16px; height: 16px; background: #e8e8e8; border: 1px solid #fff; border-right-color: #777; border-bottom-color: #777; pointer-events: none; }
  .sel::before { content: ""; position: absolute; z-index: 1; right: 5px; top: 6px; width: 7px; height: 4px; background: #000; clip-path: polygon(0 0, 100% 0, 50% 100%); pointer-events: none; }
  .sel select { appearance: none; width: 100%; height: 16px; font-size: 13px; line-height: 16px; padding-left: 1px; }
  .account { width: 198px; }
  .mask { position: absolute; left: 44px; top: 0; width: 90px; height: 14px; background: #000; }
  .swatch { width: 16px; height: 16px; flex: none; }
  time { font: bold 14px/20px "Liberation Serif", serif; color: #1010a8; }
  .clip { overflow: hidden; border-left: 1px solid #666; margin-left: 1px; flex: 1; font-size: 16px; }
  .book { width: 669px; }
  .c1 { width: 19px; } .c2 { width: 38px; } .c3 { width: 102px; } .c4 { width: 87px; } .c5 { width: 105px; }
  .c6 { width: 51px; } .c7 { width: 83px; } .c8 { width: 82px; }
  .book th { height: 28px; padding: 0 0 3px; background: linear-gradient(#f4f4f0, #c2c2ba); color: #333; font-weight: 400; border-right: 1px solid #999; border-bottom: 1px solid #888; line-height: 23px; }
  .tickhead svg { width: 15px; height: 17px; display: block; margin-left: 2px; }
  .book td { height: 29px; padding: 0; text-align: right; border-right: 1px solid #a0a0a0; border-bottom: 1px solid #a0a0a0; line-height: 28px; white-space: nowrap; }
  .book tbody tr:nth-child(even) td { background: #222; }
  .book td.mid { text-align: center; }
  .book td.time { text-align: left; padding-left: 9px; }
  .book td.ck { text-align: left; line-height: 0; }
  .ck input { appearance: none; width: 12px; height: 12px; margin-left: 3px; background: #c4c4c4; border: 1px solid #888; }
  .ck input.live { background: linear-gradient(135deg, #fff, #aaa); }
  .ops div { display: grid; grid-template-columns: 1fr 1fr; height: 28px; }
  .ops button { background: #efefef; color: #000; font-size: 12px; border: 1px solid #fff; border-right-color: #888; border-bottom-color: #888; }

  .status { display: flex; align-items: stretch; background: linear-gradient(#dfe4ee, #d0d7e6 50%, #b2bcd6); border-top: 3px solid #fff; border-bottom: 2px solid #4f6d8c; box-shadow: inset 0 1px 0 #8890a8; padding: 2px 0 0 4px; color: #000; white-space: nowrap; min-width: 0; }
  .strip .status { padding-left: 3px; overflow: hidden; }
  .strip .stab { width: 24px; height: 18px; flex: none; }
  .page { height: 18px; line-height: 16px; padding: 0 5px 0 6px; background: #e4e4dc; border-right: 1px solid #667; border-left: 1px solid #fff; }
  .page.wide { padding-left: 7px; border-right: 0; background: #ececec; }
  .page.on { display: flex; gap: 4px; padding: 0 5px 0 0; background: #fbd04a; border-left: 0; }
  .page.on .stab { width: 17px; height: 18px; }
  .push { flex: 1; }
  .act { height: 18px; line-height: 16px; padding: 0 3px; margin-right: 1px; background: #ececea; border-top: 1px solid #fff; border-right: 2px solid #888; border-left: 1px solid #fff; font-size: 12px; }
  .roomy { padding: 0 8px; }
  .snug { padding: 0 1px; }
  .ok { width: 16px; height: 16px; margin: 0 0 0 8px; background: #fffff0; border: 1px solid #555; border-right-width: 2px; align-self: center; }
  .ok.first { margin-left: 5px; }
  .ok svg { display: block; width: 13px; height: 14px; }
  .clock { font-size: 13px; line-height: 18px; color: #223a68; margin-left: 9px; width: 27px; overflow: hidden; flex: none; }
</style>
